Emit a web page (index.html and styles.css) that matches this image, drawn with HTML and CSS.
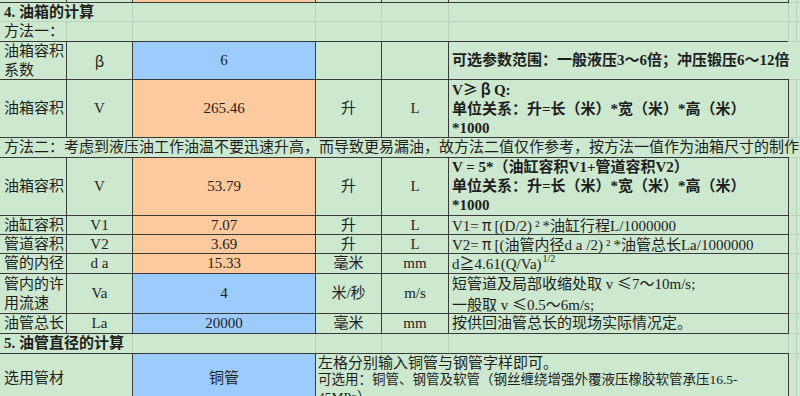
FILE: index.html
```html
<!DOCTYPE html>
<html lang="zh-CN">
<head>
<meta charset="utf-8">
<title>油箱的计算</title>
<link rel="stylesheet" href="styles.css">
</head>
<body>
<div class="sheet">
  <!-- r0 partial row -->
  <div class="c b"></div><div class="c b"></div><div class="c b or"></div><div class="c b"></div><div class="c b"></div><div class="c b"></div><div class="c"></div><div class="c"></div>
  <!-- r1 -->
  <div class="c s2 bold">4. 油箱的计算</div><div class="c"></div><div class="c"></div><div class="c"></div><div class="c"></div><div class="c"></div><div class="c"></div>
  <!-- r2 -->
  <div class="c">方法一：</div><div class="c"></div><div class="c"></div><div class="c"></div><div class="c"></div><div class="c bb"></div><div class="c"></div><div class="c"></div>
  <!-- r3 -->
  <div class="c b wrap">油箱容积系数</div>
  <div class="c b m"><span class="fw">β</span></div>
  <div class="c b m bl">6</div>
  <div class="c b"></div>
  <div class="c b"></div>
  <div class="c s3 f bold">可选参数范围：一般液压3～6倍；冲压锻压6～12倍</div>
  <!-- r4 -->
  <div class="c b">油箱容积</div>
  <div class="c b m">V</div>
  <div class="c b m or">265.46</div>
  <div class="c b m">升</div>
  <div class="c b m">L</div>
  <div class="c b f bold"><div>V<span class="fw">≥</span><span class="fw gr">β</span>Q:<br>单位关系：升=长（米）*宽（米）*高（米）<br>*1000</div></div>
  <div class="c"></div><div class="c"></div>
  <!-- r5 -->
  <div class="c s8">方法二：考虑到液压油工作油温不要迅速升高，而导致更易漏油，故方法二值仅作参考，按方法一值作为油箱尺寸的制作依据。</div>
  <!-- r6 -->
  <div class="c b">油箱容积</div>
  <div class="c b m">V</div>
  <div class="c b m or">53.79</div>
  <div class="c b m">升</div>
  <div class="c b m">L</div>
  <div class="c b f bold"><div>V = 5*（油缸容积V1+管道容积V2）<br>单位关系：升=长（米）*宽（米）*高（米）<br>*1000</div></div>
  <div class="c"></div><div class="c"></div>
  <!-- r7 -->
  <div class="c b">油缸容积</div>
  <div class="c b m">V1</div>
  <div class="c b m or">7.07</div>
  <div class="c b m">升</div>
  <div class="c b m">L</div>
  <div class="c b f"><span>V1=<span class="fw gr">π</span>[(D/2)<span class="sq">²</span>*油缸行程L/1000000</span></div>
  <div class="c"></div><div class="c"></div>
  <!-- r8 -->
  <div class="c b">管道容积</div>
  <div class="c b m">V2</div>
  <div class="c b m or">3.69</div>
  <div class="c b m">升</div>
  <div class="c b m">L</div>
  <div class="c b f"><span>V2=<span class="fw gr">π</span>[(油管内径d a /2)<span class="sq">²</span>*油管总长La/1000000</span></div>
  <div class="c"></div><div class="c"></div>
  <!-- r9 -->
  <div class="c b">管的内径</div>
  <div class="c b m">d a</div>
  <div class="c b m or">15.33</div>
  <div class="c b m">毫米</div>
  <div class="c b m">mm</div>
  <div class="c b f low"><span>d<span class="fw">≧</span>4.61(Q/Va)<span class="sup">1/2</span></span></div>
  <div class="c"></div><div class="c"></div>
  <!-- r10 -->
  <div class="c b wrap">管内的许用流速</div>
  <div class="c b m">Va</div>
  <div class="c b m bl">4</div>
  <div class="c b m">米/秒</div>
  <div class="c b m">m/s</div>
  <div class="c b f"><div>短管道及局部收缩处取 v <span class="fw">≤</span>7～10m/s;<br>一般取 v <span class="fw">≤</span>0.5～6m/s;</div></div>
  <div class="c"></div><div class="c"></div>
  <!-- r11 -->
  <div class="c b">油管总长</div>
  <div class="c b m">La</div>
  <div class="c b m bl">20000</div>
  <div class="c b m">毫米</div>
  <div class="c b m">mm</div>
  <div class="c b f">按供回油管总长的现场实际情况定。</div>
  <div class="c"></div><div class="c"></div>
  <!-- r12 -->
  <div class="c s2 bold">5. 油管直径的计算</div><div class="c"></div><div class="c"></div><div class="c"></div><div class="c"></div><div class="c"></div><div class="c"></div>
  <!-- r13 -->
  <div class="c s2 b">选用管材</div>
  <div class="c b m bl">铜管</div>
  <div class="c s3 b note"><div>左格分别输入铜管与钢管字样即可。<br><span class="small">可选用：铜管、钢管及软管（钢丝缠绕增强外覆液压橡胶软管承压16.5-<br>45MPa）</span></div></div>
  <div class="c"></div><div class="c"></div>
</div>
</body>
</html>
```

FILE: styles.css
```css
html, body {
  margin: 0;
  padding: 0;
  background: #cce8cf;
  overflow: hidden;
}

.sheet {
  display: grid;
  width: 830px;
  grid-template-columns: 66px 65px 182px 65px 66px 339px 7px 33px;
  grid-template-rows: 2px 18px 19px 37px 57px 19px 57px 18px 18px 19px 39px 19px 19px 48px;
  gap: 1px;
  background: #b9d3bc;
  font-family: "Liberation Serif", "Noto Sans CJK SC", serif;
  font-size: 15px;
  line-height: 19px;
  color: #1e1e1e;
}

.c {
  background: #cce8cf;
  display: flex;
  align-items: center;
  padding: 0 0 0 4px;
  white-space: nowrap;
  min-width: 0;
  min-height: 0;
}

.wrap {
  white-space: normal;
}

.m {
  justify-content: center;
  text-align: center;
  padding: 0;
}

.f {
  padding-left: 3px;
}

.b {
  box-shadow: 0 0 0 1px #3a3a3a;
}

.bb {
  box-shadow: 0 1px 0 0 #3a3a3a;
}

.or {
  background: #fcca9c;
}

.bl {
  background: #9ccbfd;
}

.bold {
  font-weight: 700;
}

.s2 {
  grid-column: span 2;
}

.s3 {
  grid-column: span 3;
}

.s8 {
  grid-column: 1 / -1;
}

.fw {
  font-family: "Noto Sans CJK SC", sans-serif;
  font-feature-settings: "fwid" 1;
}

.gr {
  margin: 0 3px;
}

.sq {
  margin: 0 3px 0 3px;
}

.low {
  align-items: flex-end;
  line-height: 18px;
}

.sup {
  font-size: 10px;
  line-height: 0;
  vertical-align: 7px;
  margin-left: 1px;
}

.note {
  align-items: flex-start;
  padding-left: 2px;
  line-height: 16px;
  padding-top: 1px;
}

.small {
  font-size: 13.5px;
}
```
